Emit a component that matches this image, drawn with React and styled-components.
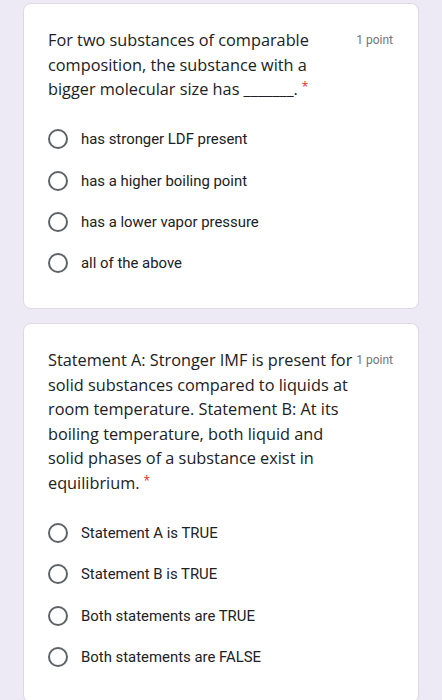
import React from "react";
import styled, { createGlobalStyle } from "styled-components";

const GlobalStyle = createGlobalStyle`
  html, body {
    margin: 0;
    padding: 0;
    background: #ede9f5;
  }
  body {
    font-family: Roboto, "Liberation Sans", sans-serif;
    color: #202124;
  }
`;

const questions = [
  {
    id: 1,
    lines: [
      "For two substances of comparable",
      "composition, the substance with a",
      "bigger molecular size has _______.",
    ],
    options: [
      "has stronger LDF present",
      "has a higher boiling point",
      "has a lower vapor pressure",
      "all of the above",
    ],
  },
  {
    id: 2,
    lines: [
      "Statement A: Stronger IMF is present for",
      "solid substances compared to liquids at",
      "room temperature. Statement B: At its",
      "boiling temperature, both liquid and",
      "solid phases of a substance exist in",
      "equilibrium.",
    ],
    options: [
      "Statement A is TRUE",
      "Statement B is TRUE",
      "Both statements are TRUE",
      "Both statements are FALSE",
    ],
  },
];

function App() {
  return (
    <Page>
      <GlobalStyle />
      {questions.map((q) => (
        <Card key={q.id}>
          <Header>
            <Question>
              {q.lines.map((line, i) => (
                <Line key={i}>
                  {line}
                  {i === q.lines.length - 1 && <Required>*</Required>}
                </Line>
              ))}
            </Question>
            <Points>1 point</Points>
          </Header>
          <Options>
            {q.options.map((opt) => (
              <Option key={opt}>
                <Radio />
                <Label>{opt}</Label>
              </Option>
            ))}
          </Options>
        </Card>
      ))}
    </Page>
  );
}

export default App;

const Page = styled.div`
  display: flex;
  flex-direction: column;
  gap: 14px;
  padding: 3px 23px 0;
  min-height: 700px;
  box-sizing: border-box;
`;

const Card = styled.section`
  background: #fff;
  border: 1px solid #dcdae3;
  border-radius: 8px;
  padding: 24px 25px 24px 24px;
`;

const Header = styled.div`
  display: flex;
  align-items: flex-start;
  justify-content: space-between;
  gap: 6px;
`;

const Question = styled.div`
  flex: 1;
  min-width: 0;
  font-family: "Open Sans", sans-serif;
  font-size: 16.3px;
  line-height: 24.6px;
  color: #202124;
`;

const Line = styled.div`
  white-space: nowrap;
`;

const Required = styled.span`
  margin-left: 4px;
  color: #d93025;
  font-size: 12px;
  vertical-align: top;
  line-height: 20px;
`;

const Points = styled.div`
  flex: none;
  padding-top: 4px;
  font-family: Roboto, sans-serif;
  font-size: 12px;
  line-height: 16px;
  color: #70757a;
  text-align: right;
`;

const Options = styled.div`
  margin-top: 17px;
  display: flex;
  flex-direction: column;
`;

const Option = styled.div`
  display: flex;
  align-items: center;
  gap: 13px;
  height: 41.3px;
`;

const Radio = styled.span`
  width: 20px;
  height: 20px;
  box-sizing: border-box;
  border: 2px solid #5f6368;
  border-radius: 50%;
  flex: none;
`;

const Label = styled.span`
  font-family: Roboto, sans-serif;
  font-size: 14.9px;
  color: #202124;
`;
